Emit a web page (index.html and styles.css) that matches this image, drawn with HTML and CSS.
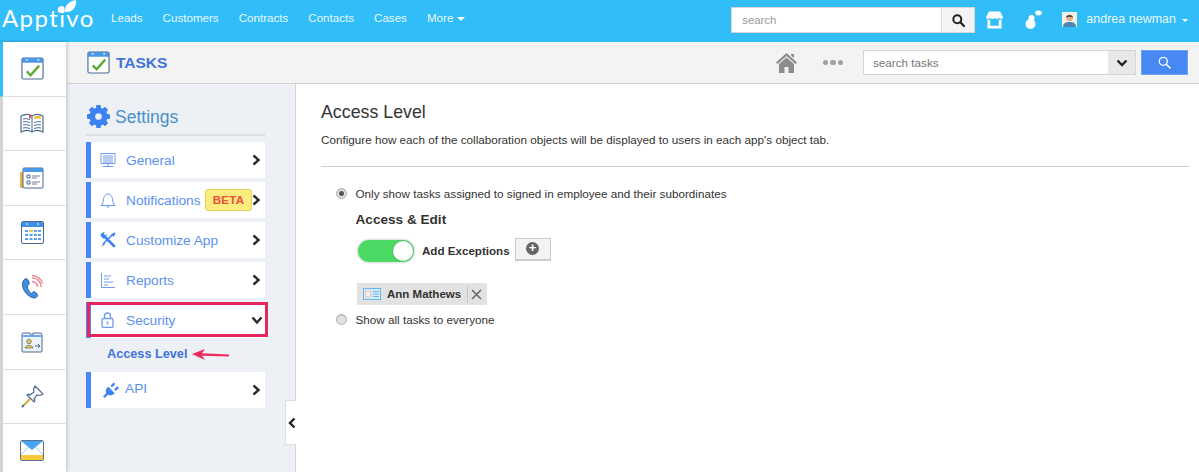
FILE: index.html
```html
<!DOCTYPE html>
<html lang="en">
<head>
    <meta charset="UTF-8">
    <title>Tasks | Settings</title>
    <link rel="stylesheet" href="styles.css">
</head>

<body>
    <div class="topbar">
        <div class="logo">Apptivo
            <svg class="logo-leaf" width="20" height="14" viewBox="0 0 20 14"><path d="M1 12C0 8 2 6 6 6C8 8 8 11 7 13C5 13 3 13 1 12Z M8 12C7 6 12 1 19 0C20 6 16 13 8 12Z" fill="#fff"/></svg>
        </div>
        <ul class="topnav">
            <li>Leads</li>
            <li>Customers</li>
            <li>Contracts</li>
            <li>Contacts</li>
            <li>Cases</li>
            <li>More <span class="caret"></span></li>
        </ul>
        <div class="topright">
            <div class="global-search">
                <span class="global-search-text">search</span>
                <span class="global-search-btn">
                    <svg width="13" height="13" viewBox="0 0 13 13"><circle cx="5.3" cy="5.3" r="4" fill="none" stroke="#222" stroke-width="2"/><path d="M8.3 8.3L12 12" stroke="#222" stroke-width="2.2" stroke-linecap="round"/></svg>
                </span>
            </div>
            <svg class="store-icon" width="17" height="18" viewBox="0 0 18 18"><path d="M3 0H15L18 6C18 8 15 8.500 13.500 6.500C12.500 8.500 10 8.500 9 6.500C8 8.500 5.500 8.500 4.500 6.500C3 8.500 0 8 0 6Z" fill="#fff"/><path d="M1.500 8.500C3 9 4 9 4.500 8.500V15H13.500V8.500C14 9 15 9 16.500 8.500V18H1.500Z" fill="#fff"/></svg>
            <svg class="chat-icon" width="17" height="19" viewBox="0 0 17 19"><circle cx="5.500" cy="14" r="5" fill="#fff"/><circle cx="6.500" cy="8" r="3" fill="#fff"/><ellipse cx="13.500" cy="3" rx="3.300" ry="2.400" fill="#fff"/></svg>
            <svg class="avatar" width="15" height="15" viewBox="0 0 15 15"><rect width="15" height="15" fill="#f2eee9"/><path d="M1 15C1 11 4 10 7.500 10S14 11 14 15Z" fill="#4a86b8"/><circle cx="7.500" cy="6" r="3.300" fill="#e0b090"/><path d="M4 5.500C4 2 11 2 11 5.500C9 4.500 6 4.500 4 5.500Z" fill="#5a3a28"/></svg>
            <span class="user-name">andrea newman</span>
            <span class="caret user-caret"></span>
        </div>
    </div>

    <div class="main">
        <div class="rail">
            <div class="rail-item active">
                <svg width="23" height="23" viewBox="0 0 24 24"><rect x="1" y="1" width="22" height="22" rx="1.500" fill="#fff" stroke="#4b6a92" stroke-width="1.200"/><path d="M1 2.500Q1 1 2.500 1H21.500Q23 1 23 2.500V6H1Z" fill="#4a97e8"/><path d="M5 3H7M17 3H19" stroke="#fff" stroke-width="1.400"/><path d="M6 15L10 19L19 9" fill="none" stroke="#5aaa32" stroke-width="2.400"/></svg>
            </div>
            <div class="rail-item">
                <svg width="24" height="20" viewBox="0 0 24 20"><path d="M1 3C5 1 9 1 12 3C15 1 19 1 23 3V19C19 17 15 17 12 19C9 17 5 17 1 19Z" fill="#fff" stroke="#4b6a92" stroke-width="1.200"/><path d="M12 3V19M3 6Q6 5 10 6.500M3 9Q6 8 10 9.500M3 12Q6 11 10 12.500M3 15Q6 14 10 15.500M14 9.500Q18 8 21 9M14 12.500Q18 11 21 12M14 15.500Q18 14 21 15" stroke="#4b6a92" fill="none"/><path d="M14 3.500Q18 2 21 3.500V6Q18 5 14 6Z" fill="#f5c33b"/><path d="M9 1.500H11V6L10 5L9 6Z" fill="#e8505b"/></svg>
            </div>
            <div class="rail-item">
                <svg width="24" height="22" viewBox="0 0 24 22"><rect x="0" y="5" width="6" height="16" rx="1" fill="#e8b23a"/><rect x="3" y="1" width="20" height="20" rx="1" fill="#fff" stroke="#4b6a92"/><rect x="3" y="1" width="20" height="4" fill="#4a97e8"/><path d="M7 8H10V11H7ZM7 14H10V17H7Z" fill="#fff" stroke="#4b6a92"/><path d="M12 9H20M12 11H17M12 15H20M12 17H17" stroke="#6a7f9c"/></svg>
            </div>
            <div class="rail-item">
                <svg width="23" height="23" viewBox="0 0 23 23"><rect x=".5" y=".5" width="22" height="22" rx="1.500" fill="#fff" stroke="#4b6a92"/><path d="M1 2Q1 1 2 1H21Q22 1 22 2V6H1Z" fill="#3f8fe6"/><path d="M5 3H7M16 3H18" stroke="#fff"/><path d="M4 9H7V11H4ZM8.500 9H11.500V11H8.500ZM13 9H16V11H13ZM17 9H20V11H17ZM4 13H7V15H4ZM8.500 13H11.500V15H8.500ZM13 13H16V15H13ZM17 13H20V15H17ZM4 17H7V19H4ZM8.500 17H11.500V19H8.500ZM13 17H16V19H13ZM17 17H20V19H17Z" fill="#5aa3ee"/><rect x="8.500" y="9" width="3" height="2" fill="#f5c33b"/></svg>
            </div>
            <div class="rail-item">
                <svg width="22" height="26" viewBox="0 0 24 26"><path d="M5 4C2 5 1 9 2 13C3 18 8 24 14 25C16 25 18 24 18 22C18 20 15 18 14 18C13 18 12 20 11 20C9 19 7 15 7 12C7 11 9 11 9 9C9 7 7 3 5 4Z" fill="#3f8fe6" stroke="#3a5c88"/><path d="M12 7A6 6 0 0 1 18 13M12 3A10 10 0 0 1 22 13M12 .500A13 13 0 0 1 23.500 9" fill="none" stroke="#ee7f8b" stroke-width="1.500"/></svg>
            </div>
            <div class="rail-item">
                <svg width="22" height="22" viewBox="0 0 22 22"><path d="M1 3Q1 2 2 2H9L10 4H12V2H19Q21 2 21 4V20Q21 21 20 21H2Q1 21 1 20Z" fill="#eef4fb" stroke="#4b6a92"/><path d="M1 4H21V6H1Z" fill="#6aa8ea"/><circle cx="8" cy="10.500" r="2.300" fill="#f5c33b" stroke="#4b6a92" stroke-width=".7"/><path d="M4 17C4 13.500 12 13.500 12 17Z" fill="#f5c33b" stroke="#4b6a92" stroke-width=".7"/><path d="M14 15H19M17 13L19 15L17 17" fill="none" stroke="#4b6a92"/></svg>
            </div>
            <div class="rail-item">
                <svg width="23" height="23" viewBox="0 0 23 23"><path d="M14 1L22 9L19 10.500L16 10L13 14C14 15 14 16 13 17L6 10C7 9 8 9 9 10L13 7L12.500 4Z" fill="#fff" stroke="#4b6a92" stroke-width="1.200"/><path d="M9 14L3 20" stroke="#d9a93a" stroke-width="2"/><path d="M3 20L1 22" stroke="#4b6a92" stroke-width="2"/></svg>
            </div>
            <div class="rail-item">
                <svg width="24" height="21" viewBox="0 0 24 21"><rect x=".5" y=".5" width="23" height="20" rx="1.500" fill="#fff" stroke="#5b7391"/><path d="M1 1H23L12 10Z" fill="#48a5f5"/><rect x="1" y="15" width="22" height="5" fill="#f6c93c"/><path d="M1 15L8 7.500M23 15L16 7.500" stroke="#9cc6ea"/></svg>
            </div>
        </div>

        <div class="workspace">
            <div class="app-header">
                <svg width="23" height="23" viewBox="0 0 24 24"><rect x="1" y="1" width="22" height="22" rx="1.500" fill="#fff" stroke="#4b6a92" stroke-width="1.200"/><path d="M1 2.500Q1 1 2.500 1H21.500Q23 1 23 2.500V6H1Z" fill="#4a97e8"/><path d="M5 3H7M17 3H19" stroke="#fff" stroke-width="1.400"/><path d="M6 15L10 19L19 9" fill="none" stroke="#5aaa32" stroke-width="2.400"/></svg>
                <span class="app-title">TASKS</span>
                <div class="app-tools">
                    <svg width="21" height="20" viewBox="0 0 21 20"><path d="M10.500 0L21 9.500L19.500 11L10.500 3L1.500 11L0 9.500Z M15 1H18V5L15 2.500Z" fill="#8c8c8c"/><path d="M3 11L10.500 4.500L18 11V20H12.500V14H8.500V20H3Z" fill="#8c8c8c"/></svg>
                    <div class="dots"><i></i><i></i><i></i></div>
                    <div class="task-search">
                        <span class="task-search-text">search tasks</span>
                        <span class="task-search-drop">
                            <svg width="12" height="8" viewBox="0 0 12 8"><path d="M1.500 1.500L6 6L10.500 1.500" fill="none" stroke="#222" stroke-width="2.400"/></svg>
                        </span>
                    </div>
                    <div class="task-search-btn">
                        <svg width="13" height="13" viewBox="0 0 13 13"><circle cx="5.300" cy="5.300" r="4" fill="none" stroke="#fff" stroke-width="1.300"/><path d="M8.300 8.300L12 12" stroke="#fff" stroke-width="1.500" stroke-linecap="round"/></svg>
                    </div>
                </div>
            </div>

            <div class="body-row">
                <div class="sidebar">
                    <div class="sidebar-title">
                        <svg width="23" height="23" viewBox="0 0 24 24" fill="#3c82f0"><circle cx="12" cy="12" r="6.500" fill="none" stroke="#3c82f0" stroke-width="6"/><rect x="9.500" y="0" width="5" height="6" rx="1"/><rect x="9.500" y="0" width="5" height="6" rx="1" transform="rotate(45 12 12)"/><rect x="9.500" y="0" width="5" height="6" rx="1" transform="rotate(90 12 12)"/><rect x="9.500" y="0" width="5" height="6" rx="1" transform="rotate(135 12 12)"/><rect x="9.500" y="0" width="5" height="6" rx="1" transform="rotate(180 12 12)"/><rect x="9.500" y="0" width="5" height="6" rx="1" transform="rotate(225 12 12)"/><rect x="9.500" y="0" width="5" height="6" rx="1" transform="rotate(270 12 12)"/><rect x="9.500" y="0" width="5" height="6" rx="1" transform="rotate(315 12 12)"/></svg>
                        <span>Settings</span>
                    </div>
                    <div class="menu-item">
                        <svg class="menu-icon" width="16" height="15" viewBox="0 0 16 15"><path d="M1 .5H15V10.500H1Z" fill="none" stroke="#6f9cf0"/><path d="M3 3H13M3 5H13M3 7H13M3 9H13M8 11V13M3 13.500H13" stroke="#6f9cf0"/></svg>
                        <span class="menu-label">General</span>
                        <svg class="chevron" width="9" height="12" viewBox="0 0 9 12"><path d="M1.500 1.500L6.500 6L1.500 10.500" fill="none" stroke="#2a2a2a" stroke-width="2.400"/></svg>
                    </div>
                    <div class="menu-item">
                        <svg class="menu-icon" width="16" height="15" viewBox="0 0 16 15"><path d="M1 12.500C3 11 3 9 3.500 6C4 2.500 6 1 8 1S12 2.500 12.500 6C13 9 13 11 15 12.500ZM6.500 13.500Q8 15 9.500 13.500" fill="none" stroke="#6f9cf0"/></svg>
                        <span class="menu-label">Notifications</span>
                        <span class="beta">BETA</span>
                        <svg class="chevron" width="9" height="12" viewBox="0 0 9 12"><path d="M1.500 1.500L6.500 6L1.500 10.500" fill="none" stroke="#2a2a2a" stroke-width="2.400"/></svg>
                    </div>
                    <div class="menu-item">
                        <svg class="menu-icon" width="16" height="16" viewBox="0 0 16 16"><path d="M3 3L14 14" stroke="#3c82f0" stroke-width="2.600" stroke-linecap="round"/><path d="M12 3L3 12" stroke="#3c82f0" stroke-width="1.600"/><path d="M.500 3.500A3.500 3.500 0 0 1 5 .500L3 2.500L4.500 4L6.500 2A3.500 3.500 0 0 1 3 6.500Z" fill="#3c82f0"/><path d="M11 2.500L14.500 .500L15.500 1.500L13.500 5Z" fill="#3c82f0"/><path d="M4 11L1 15L5 12.500Z" fill="#3c82f0"/></svg>
                        <span class="menu-label">Customize App</span>
                        <svg class="chevron" width="9" height="12" viewBox="0 0 9 12"><path d="M1.500 1.500L6.500 6L1.500 10.500" fill="none" stroke="#2a2a2a" stroke-width="2.400"/></svg>
                    </div>
                    <div class="menu-item">
                        <svg class="menu-icon" width="16" height="15" viewBox="0 0 16 15"><path d="M1.500 0V14.500H15M4 3H11M4 6H9M4 9H13M4 12H8" fill="none" stroke="#6f9cf0"/></svg>
                        <span class="menu-label">Reports</span>
                        <svg class="chevron" width="9" height="12" viewBox="0 0 9 12"><path d="M1.500 1.500L6.500 6L1.500 10.500" fill="none" stroke="#2a2a2a" stroke-width="2.400"/></svg>
                    </div>
                    <div class="menu-item selected">
                        <svg class="menu-icon" width="13" height="16" viewBox="0 0 13 16"><path d="M3.500 7V4A3 3 0 0 1 9.500 4V7" fill="none" stroke="#6f9cf0" stroke-width="1.300"/><rect x="1" y="6.500" width="11" height="9" rx="1.500" fill="none" stroke="#6f9cf0" stroke-width="1.300"/><path d="M6.500 9.500V12.500" stroke="#6f9cf0" stroke-width="1.500"/></svg>
                        <span class="menu-label">Security</span>
                        <svg class="chevron-down" width="12" height="9" viewBox="0 0 12 9"><path d="M1.500 1.500L6 6.500L10.500 1.500" fill="none" stroke="#2a2a2a" stroke-width="2.400"/></svg>
                    </div>
                    <div class="submenu">
                        <span>Access Level</span>
                        <svg class="sub-arrow" width="38" height="11" viewBox="0 0 38 11"><path d="M0 5L13 0L10 4.200L37 5.500V7.500L10 6.800L13 11Z" fill="#ee2a5c"/></svg>
                    </div>
                    <div class="menu-item">
                        <svg class="menu-icon plug" width="17" height="16" viewBox="0 0 16 15"><path d="M0 13.500L3 10.500C2 8 3 6 5 4.500L11 10.500C9 12.500 7 13 4.500 12L1.500 15ZM7 3.500L10 .500L11.500 2L8.500 5ZM10.500 7L13.500 4L15 5.500L12 8.500Z" fill="#3c82f0"/></svg>
                        <span class="menu-label api">API</span>
                        <svg class="chevron" width="9" height="12" viewBox="0 0 9 12"><path d="M1.500 1.500L6.500 6L1.500 10.500" fill="none" stroke="#2a2a2a" stroke-width="2.400"/></svg>
                    </div>
                </div>

                <div class="content">
                    <div class="collapse-tab">
                        <svg width="8" height="12" viewBox="0 0 8 12"><path d="M6.500 1.500L2 6L6.500 10.500" fill="none" stroke="#222" stroke-width="2.400"/></svg>
                    </div>
                    <h2>Access Level</h2>
                    <p class="desc">Configure how each of the collaboration objects will be displayed to users in each app's object tab.</p>
                    <hr>
                    <div class="option">
                        <span class="radio checked"></span>
                        <span>Only show tasks assigned to signed in employee and their subordinates</span>
                    </div>
                    <div class="access-block">
                        <h3>Access &amp; Edit</h3>
                        <div class="exception-row">
                            <span class="toggle"><span class="toggle-knob"></span></span>
                            <span class="exception-label">Add Exceptions</span>
                            <span class="add-btn"><span class="add-circle">+</span></span>
                        </div>
                        <div class="chip">
                            <svg width="18" height="12" viewBox="0 0 18 12"><rect x=".5" y=".5" width="17" height="11" fill="#d5ecfb" stroke="#6ab7f0"/><rect x="2.500" y="3" width="5" height="6" fill="#fbeee6" stroke="#e9a9a0" stroke-width=".6"/><path d="M9.500 3.500H16M9.500 6H16M9.500 8.500H16" stroke="#6ab7f0"/></svg>
                            <span class="chip-name">Ann Mathews</span>
                            <span class="chip-close">
                                <svg width="11" height="11" viewBox="0 0 11 11"><path d="M1 1L10 10M10 1L1 10" stroke="#666" stroke-width="1.500"/></svg>
                            </span>
                        </div>
                    </div>
                    <div class="option last">
                        <span class="radio"></span>
                        <span>Show all tasks to everyone</span>
                    </div>
                </div>
            </div>
        </div>
    </div>
</body>

</html>
```

FILE: styles.css
```css
html, body {
    height: 100%;
}

body {
    margin: 0;
    height: 472px;
    overflow: hidden;
    font-family: 'Liberation Sans', Arial, sans-serif;
    color: #333;
    background-color: white;
}

/* top blue bar */
.topbar {
    height: 42px;
    background-color: #31bdf7;
    display: flex;
    align-items: center;
    color: white;
}

.logo {
    position: relative;
    width: 111px;
    height: 42px;
    padding-left: 2px;
    box-sizing: border-box;
    font-family: 'Lato', sans-serif;
    font-weight: 400;
    font-size: 24px;
    line-height: 36px;
    letter-spacing: 1.400px;
    color: white;
}

.logo-leaf {
    position: absolute;
    left: 57px;
    top: 0;
}

.topnav {
    list-style: none;
    margin: 0;
    padding: 0 0 7px 0;
    display: flex;
    gap: 20px;
    font-size: 11.600px;
    color: #e8f7fe;
}

.caret {
    display: inline-block;
    width: 0;
    height: 0;
    border-left: 4px solid transparent;
    border-right: 4px solid transparent;
    border-top: 4px solid white;
    vertical-align: middle;
}

.topright {
    margin-left: auto;
    display: flex;
    align-items: center;
    padding-right: 11px;
}

.global-search {
    width: 244px;
    height: 26px;
    box-sizing: border-box;
    margin-right: 11px;
    margin-bottom: 2px;
    background-color: white;
    border: 1px solid #d5d5d5;
    display: flex;
    align-items: center;
    font-size: 11.300px;
    color: #999;
}

.global-search-text {
    flex: 1;
    padding-left: 10px;
}

.global-search-btn {
    width: 32px;
    height: 100%;
    background-color: #f3f3f3;
    border-left: 1px solid #ddd;
    display: flex;
    align-items: center;
    justify-content: center;
}

.store-icon {
    margin-right: 22px;
    margin-bottom: 2px;
}

.chat-icon {
    margin-right: 20px;
    margin-bottom: 3px;
}

.avatar {
    margin-right: 9px;
    margin-bottom: 3px;
}

.user-name {
    font-size: 12.500px;
    color: #e8f7fe;
    margin-right: 6px;
    margin-bottom: 4px;
}

.user-caret {
    margin-bottom: 2px;
    border-left-width: 3.500px;
    border-right-width: 3.500px;
    border-top-width: 3.500px;
}

/* main layout */
.main {
    display: flex;
    height: 430px;
}

.rail {
    width: 66px;
    margin-right: 1px;
    flex-shrink: 0;
    box-shadow: 1px 0 3px rgba(0, 0, 0, 0.25);
    background-color: white;
    z-index: 1;
    overflow: hidden;
}

.rail-item {
    height: 54.600px;
    box-sizing: border-box;
    border-left: 3px solid #d4d4d4;
    border-bottom: 1px solid #dedede;
    padding-right: 5px;
    display: flex;
    align-items: center;
    justify-content: center;
}

.rail-item.active {
    border-left-color: #31bdf7;
}

.workspace {
    flex: 1;
    min-width: 0;
    display: flex;
    flex-direction: column;
}

.app-header {
    height: 42px;
    box-sizing: border-box;
    background-color: #f3f3f3;
    border-bottom: 1px solid #cfcfcf;
    display: flex;
    align-items: center;
    padding-left: 20px;
}

.app-title {
    margin-left: 6px;
    font-size: 15.500px;
    font-weight: bold;
    color: #3f74de;
}

.app-tools {
    margin-left: auto;
    display: flex;
    align-items: center;
    padding-right: 11px;
}

.dots {
    display: flex;
    gap: 2px;
    margin-left: 26px;
    margin-right: 20px;
}

.dots i {
    width: 5.500px;
    height: 5.500px;
    border-radius: 50%;
    background-color: #a0a0a0;
}

.task-search {
    width: 273px;
    height: 25px;
    box-sizing: border-box;
    background-color: white;
    border: 1px solid #d5d5d5;
    display: flex;
    align-items: center;
    font-size: 11.700px;
    color: #777;
}

.task-search-text {
    flex: 1;
    padding-left: 9px;
}

.task-search-drop {
    width: 27px;
    height: 100%;
    background-color: #e8e8e8;
    display: flex;
    align-items: center;
    justify-content: center;
}

.task-search-btn {
    width: 47px;
    height: 25px;
    margin-left: 5px;
    background-color: #4788f2;
    border: 1px solid #6ea4f5;
    box-sizing: border-box;
    display: flex;
    align-items: center;
    justify-content: center;
}

.body-row {
    flex: 1;
    display: flex;
    min-height: 0;
}

/* settings sidebar */
.sidebar {
    width: 229px;
    flex-shrink: 0;
    box-sizing: border-box;
    background-color: #edf0f5;
    border-right: 1px solid #d5d5d5;
    padding: 20px 30px 0 19px;
}

.sidebar-title {
    display: flex;
    align-items: center;
    gap: 5px;
    height: 24px;
    padding-bottom: 6px;
    margin-bottom: 6px;
    border-bottom: 2px solid #dcdfe4;
    font-size: 17.500px;
    color: #4a90c8;
}

.sidebar-title svg {
    margin-left: 1px;
}

.sidebar-title span {
    margin-top: 2px;
}

.menu-item {
    height: 36px;
    margin-bottom: 4px;
    box-sizing: border-box;
    background-color: white;
    border-left: 5px solid #4788f2;
    display: flex;
    align-items: center;
    padding-left: 9px;
    position: relative;
}

.menu-icon {
    flex-shrink: 0;
}

.menu-icon.plug {
    margin-left: 3px;
}

.menu-label {
    margin-left: 10px;
    font-size: 13.700px;
    color: #5b90f0;
}

.menu-label.api {
    margin-left: 5px;
    margin-bottom: 3px;
}

.chevron {
    position: absolute;
    right: 4px;
    top: 12px;
}

.chevron-down {
    position: absolute;
    right: 2px;
    top: 14px;
}

.beta {
    position: absolute;
    left: 114px;
    top: 7px;
    width: 47px;
    height: 22px;
    box-sizing: border-box;
    background-color: #fbec7e;
    border: 1px solid #e3d05f;
    border-radius: 3px;
    color: #f24b3f;
    font-size: 11.500px;
    font-weight: bold;
    text-align: center;
    line-height: 20px;
    letter-spacing: 0.3px;
}

.menu-item.selected {
    margin-bottom: 0;
    padding-left: 10px;
}

.menu-item.selected .menu-label {
    margin-left: 12px;
}

/* red highlight drawn over the row */
.menu-item.selected::after {
    content: "";
    position: absolute;
    left: -4px;
    right: -3px;
    top: 0;
    bottom: 1px;
    border: 3px solid #e8265e;
    pointer-events: none;
}

.submenu {
    display: flex;
    align-items: center;
    height: 32px;
    padding-left: 21px;
    margin-bottom: 2px;
    font-size: 12.700px;
    font-weight: bold;
    color: #3f74de;
}

.sub-arrow {
    margin-left: 5px;
}

/* right content */
.content {
    flex: 1;
    min-width: 0;
    position: relative;
    padding: 17px 10px 0 25px;
    font-size: 11.700px;
    color: #333;
}

.collapse-tab {
    position: absolute;
    left: -11px;
    top: 316px;
    width: 10px;
    height: 43px;
    background-color: white;
    border: 1px solid #ddd;
    border-right: none;
    display: flex;
    align-items: center;
    justify-content: flex-end;
}

h2 {
    margin: 0;
    font-size: 17.800px;
    font-weight: normal;
    color: #333;
    line-height: 22px;
}

.desc {
    margin: 10px 0 0 0;
    line-height: 14px;
    color: #333;
}

hr {
    border: none;
    border-top: 1px solid #ccc;
    margin: 19px 0 0 0;
}

.option {
    display: flex;
    align-items: center;
    gap: 8.500px;
    height: 14px;
    margin-left: 15px;
}

hr + .option {
    margin-top: 19px;
}

.option.last {
    margin-top: 7px;
}

.radio {
    width: 11px;
    height: 11px;
    box-sizing: border-box;
    border-radius: 50%;
    background-color: #e2e2e2;
    border: 1px solid #adadad;
    box-shadow: inset 0 1px 1px rgba(0, 0, 0, 0.1);
    display: flex;
    align-items: center;
    justify-content: center;
}

.radio.checked::after {
    content: "";
    width: 5px;
    height: 5px;
    border-radius: 50%;
    background-color: #555;
}

.access-block {
    margin-left: 34.500px;
    padding-top: 12px;
}

h3 {
    margin: 0;
    font-size: 13.600px;
    line-height: 16px;
    color: #333;
}

.exception-row {
    display: flex;
    align-items: center;
    margin-top: 10px;
    height: 25px;
}

.toggle {
    width: 56px;
    height: 22px;
    margin-left: 2.500px;
    box-sizing: border-box;
    background-color: #4cd964;
    border-radius: 11px;
    box-shadow: 0 0 0 1.500px #e8e8e8;
    display: flex;
    justify-content: flex-end;
    align-items: center;
    padding-right: 1px;
}

.toggle-knob {
    width: 20px;
    height: 20px;
    border-radius: 50%;
    background-color: white;
    box-shadow: 0 0 2px rgba(0, 0, 0, 0.3);
}

.exception-label {
    margin-left: 8px;
    font-weight: bold;
    font-size: 11.600px;
}

.add-btn {
    width: 36px;
    height: 23px;
    box-sizing: border-box;
    margin-left: 5px;
    margin-bottom: 3px;
    background-color: #f3f3f3;
    border: 1px solid #ccc;
    border-bottom-width: 2px;
    display: flex;
    align-items: center;
    justify-content: center;
}

.add-circle {
    width: 13px;
    height: 13px;
    border-radius: 50%;
    background-color: #666;
    color: white;
    font-size: 13px;
    font-weight: bold;
    line-height: 12px;
    text-align: center;
}

.chip {
    display: inline-flex;
    align-items: center;
    height: 22px;
    margin-top: 20px;
    margin-left: 1.500px;
    padding-left: 6px;
    background-color: #e2e2e2;
    vertical-align: top;
}

.chip-name {
    margin-left: 6px;
    font-weight: bold;
    font-size: 11.500px;
}

.chip-close {
    margin-left: 6px;
    padding: 0 5px 0 3px;
    height: 18px;
    border-left: 1px solid #c8c8c8;
    display: flex;
    align-items: center;
}
```
